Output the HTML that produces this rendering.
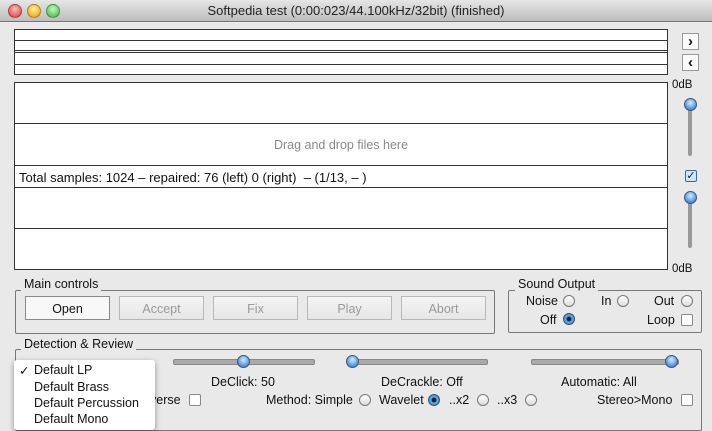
<!DOCTYPE html><html><head><style>
body{margin:0;width:712px;height:424px;overflow:hidden;background:#e9e9e9;font-family:"Liberation Sans",sans-serif;font-size:12.5px;color:#111;position:relative}
.a{position:absolute}
.ln{position:absolute;left:14px;width:654px;height:0;border-top:1.5px solid #333}
.title{left:0;top:0;width:712px;height:21px;background:linear-gradient(#e6e6e6,#bdbdbd);border-bottom:1px solid #777;text-align:center;line-height:21px;font-size:13px;color:#222}
.dot{width:12px;height:12px;border-radius:50%;top:4px;border:1px solid rgba(0,0,0,.3)}
.vb{border-left:1.5px solid #333}
.grp{border:1px solid #777;border-radius:2px}
.lbl{background:#e9e9e9;padding:0 3px;font-size:12.5px}
.btn{height:24px;border:1px solid #b8b8b8;background:linear-gradient(#f4f4f4,#e6e6e6);text-align:center;line-height:24px;color:#999;font-size:12.5px;box-sizing:border-box}
.rad{width:12px;height:12px;border-radius:50%;border:1px solid #777;background:linear-gradient(#fff,#ddd);box-sizing:border-box}
.rad.on{background:radial-gradient(circle,#123 0 2px,#6ab0f0 3px,#2a7fd0 6px);border-color:#357}
.chk{width:12px;height:12px;border:1px solid #888;background:#fff;box-sizing:border-box;border-radius:2px}
.trk{height:4px;background:#aaa;border:1px solid #888;border-radius:2px}
.thumb{width:13px;height:13px;border-radius:50%;background:radial-gradient(circle at 50% 35%,#d8eaff,#5a9ee8 60%,#2a6cc0);border:1px solid #456;box-sizing:border-box}
</style></head><body>
<div class="a title">Softpedia test (0:00:023/44.100kHz/32bit) (finished)</div>
<div class="a dot" style="left:8px;background:radial-gradient(circle at 50% 35%,#fbb,#d33)"></div>
<div class="a dot" style="left:27px;background:radial-gradient(circle at 50% 35%,#fe9,#e90)"></div>
<div class="a dot" style="left:46px;background:radial-gradient(circle at 50% 35%,#bfb,#4a4)"></div>

<div class="a" style="left:14px;top:29px;width:654px;height:46px;background:#fff"></div>
<div class="ln" style="top:29px"></div><div class="ln" style="top:40px"></div><div class="ln" style="top:50px"></div><div class="ln" style="top:52px"></div><div class="ln" style="top:64px"></div><div class="ln" style="top:74px"></div>
<div class="a vb" style="left:14px;top:29px;height:46px"></div><div class="a vb" style="left:667px;top:29px;height:46px"></div>
<div class="a" style="left:682px;top:33px;width:17px;height:17px;border:1px solid #999;background:#fafafa;text-align:center;line-height:15px;font-size:15px;font-weight:bold;box-sizing:border-box">›</div>
<div class="a" style="left:682px;top:54px;width:17px;height:17px;border:1px solid #999;background:#fafafa;text-align:center;line-height:15px;font-size:15px;font-weight:bold;box-sizing:border-box">‹</div>

<div class="a" style="left:14px;top:82px;width:654px;height:188px;background:#fff"></div>
<div class="ln" style="top:82px"></div><div class="ln" style="top:123px"></div><div class="ln" style="top:165px"></div><div class="ln" style="top:187px"></div><div class="ln" style="top:228px"></div><div class="ln" style="top:269px"></div>
<div class="a vb" style="left:14px;top:82px;height:188px"></div><div class="a vb" style="left:667px;top:82px;height:188px"></div>
<div class="a" style="left:14px;top:138px;width:654px;text-align:center;color:#888">Drag and drop files here</div>
<div class="a" style="left:19px;top:170px;font-size:13px">Total samples: 1024 – repaired: 76 (left) 0 (right)&nbsp; – (1/13, – )</div>

<div class="a" style="left:672px;top:79px;font-size:11.5px">0dB</div>
<div class="a" style="left:672px;top:263px;font-size:11.5px">0dB</div>
<div class="a" style="left:688px;top:108px;width:4px;height:48px;background:#999;border-radius:2px"></div>
<div class="a thumb" style="left:684px;top:98px"></div>
<div class="a chk" style="left:685px;top:170px;background:#cfe3fa;border-color:#468;font-size:11px;line-height:10px;text-align:center;color:#123">✓</div>
<div class="a" style="left:688px;top:200px;width:4px;height:48px;background:#999;border-radius:2px"></div>
<div class="a thumb" style="left:684px;top:191px"></div>

<div class="a grp" style="left:15px;top:290px;width:478px;height:42px"></div>
<div class="a lbl" style="left:21px;top:277px">Main controls</div>
<div class="a btn" style="left:25px;top:296px;width:85px;color:#111;background:#f8f8f8;border-color:#888">Open</div>
<div class="a btn" style="left:119px;top:296px;width:85px">Accept</div>
<div class="a btn" style="left:213px;top:296px;width:85px">Fix</div>
<div class="a btn" style="left:307px;top:296px;width:85px">Play</div>
<div class="a btn" style="left:401px;top:296px;width:85px">Abort</div>

<div class="a grp" style="left:508px;top:290px;width:192px;height:41px"></div>
<div class="a lbl" style="left:515px;top:277px">Sound Output</div>
<div class="a" style="left:526px;top:294px">Noise</div><div class="a rad" style="left:563px;top:295px"></div>
<div class="a" style="left:601px;top:294px">In</div><div class="a rad" style="left:617px;top:295px"></div>
<div class="a" style="left:654px;top:294px">Out</div><div class="a rad" style="left:681px;top:295px"></div>
<div class="a" style="left:540px;top:313px">Off</div><div class="a rad on" style="left:563px;top:313px"></div>
<div class="a" style="left:647px;top:313px">Loop</div><div class="a chk" style="left:681px;top:314px"></div>

<div class="a grp" style="left:15px;top:349px;width:685px;height:80px"></div>
<div class="a lbl" style="left:21px;top:337px">Detection &amp; Review</div>
<div class="a trk" style="left:173px;top:359px;width:140px"></div><div class="a thumb" style="left:237px;top:355px"></div>
<div class="a trk" style="left:347px;top:359px;width:139px"></div><div class="a thumb" style="left:346px;top:355px"></div>
<div class="a trk" style="left:531px;top:359px;width:146px"></div><div class="a thumb" style="left:665px;top:355px"></div>
<div class="a" style="left:211px;top:375px">DeClick: 50</div>
<div class="a" style="left:381px;top:375px">DeCrackle: Off</div>
<div class="a" style="left:561px;top:375px">Automatic: All</div>
<div class="a" style="left:150px;top:393px">verse</div><div class="a chk" style="left:189px;top:394px"></div>
<div class="a" style="left:266px;top:393px">Method: Simple</div><div class="a rad" style="left:359px;top:394px"></div>
<div class="a" style="left:379px;top:393px">Wavelet</div><div class="a rad on" style="left:428px;top:394px"></div>
<div class="a" style="left:449px;top:393px">..x2</div><div class="a rad" style="left:477px;top:394px"></div>
<div class="a" style="left:497px;top:393px">..x3</div><div class="a rad" style="left:525px;top:394px"></div>
<div class="a" style="left:597px;top:393px">Stereo&gt;Mono</div><div class="a chk" style="left:681px;top:394px"></div>

<div class="a" style="left:14px;top:360px;width:141px;height:70px;background:#fff;box-shadow:0 2px 6px rgba(0,0,0,.4);border-radius:3px"></div>
<div class="a" style="left:19px;top:363px">✓</div>
<div class="a" style="left:34px;top:363px">Default LP</div>
<div class="a" style="left:34px;top:380px">Default Brass</div>
<div class="a" style="left:34px;top:396px">Default Percussion</div>
<div class="a" style="left:34px;top:412px">Default Mono</div>
</body></html>
